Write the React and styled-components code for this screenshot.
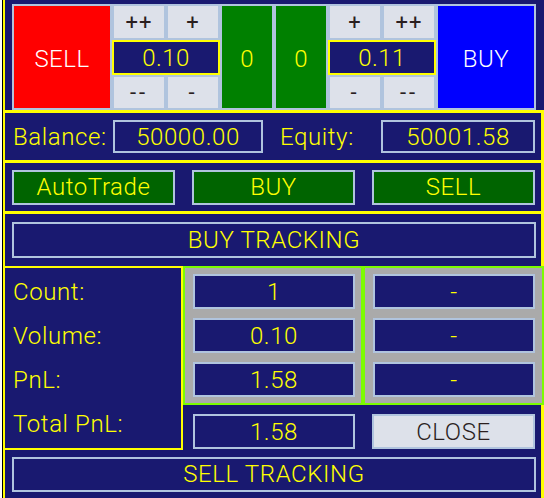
import React from "react";
import styled, { createGlobalStyle } from "styled-components";

const NAVY = "#191970";
const YELLOW = "#ffff00";
const STEEL = "#b0c4de";
const LIGHT = "#dde1ea";
const DARKTXT = "#2b1f1f";

const Global = createGlobalStyle`
  html, body { margin: 0; padding: 0; background: ${NAVY}; }
  * { box-sizing: border-box; }
  body { font-family: "Roboto", "Liberation Sans", sans-serif; font-weight: 300; }
`;

const Screen = styled.div`
  width: 544px;
  height: 498px;
  display: flex;
  overflow: hidden;
  background: ${NAVY};
`;

const Strip = styled.div`
  width: 5px;
  flex: none;
  background: linear-gradient(to right, #fff 0 2px, #000 2px 3px, ${YELLOW} 3px 5px);
`;

const Panel = styled.div`
  flex: 1;
  display: flex;
  flex-direction: column;
`;

const TopRow = styled.div`
  height: 113px;
  display: flex;
  padding: 4px 8px 0 7px;
  border-bottom: 3px solid ${YELLOW};
  overflow: hidden;
`;

const BigButton = styled.div`
  width: 100px;
  height: 106px;
  border: 2px solid ${STEEL};
  background: ${(p) => p.$bg};
  color: #fff;
  font-size: 24px;
  display: flex;
  align-items: center;
  justify-content: center;
  letter-spacing: 0.5px;
  padding-top: 3px;
`;

const Stepper = styled.div`
  width: 108px;
  display: flex;
  flex-direction: column;
`;

const StepRow = styled.div`
  display: flex;
  height: ${(p) => p.$h}px;
`;

const StepButton = styled.div`
  flex: 1;
  border: 2px solid ${STEEL};
  background: ${LIGHT};
  color: ${DARKTXT};
  font-size: 22px;
  font-weight: 400;
  display: flex;
  align-items: center;
  justify-content: center;
  letter-spacing: ${(p) => (p.$minus ? "3px" : "1px")};
`;

const LotBox = styled.div`
  height: 35px;
  border: 2px solid ${YELLOW};
  background: ${NAVY};
  color: ${YELLOW};
  font-size: 24px;
  display: flex;
  align-items: center;
  justify-content: center;
  letter-spacing: 0.5px;
`;

const GreenBox = styled.div`
  width: 54px;
  height: 106px;
  border: 2px solid ${STEEL};
  background: #008000;
  color: ${YELLOW};
  font-size: 24px;
  display: flex;
  align-items: center;
  justify-content: center;
  padding-top: 3px;
`;

const Section = styled.div`
  height: ${(p) => p.$h}px;
  padding: 0 5px 0 7px;
  border-right: 3px solid ${YELLOW};
  border-bottom: ${(p) => (p.$line ? `3px solid ${YELLOW}` : "none")};
  display: ${(p) => (p.$grid ? "grid" : "flex")};
  align-items: center;
`;

const InfoGrid = styled(Section)`
  grid-template-columns: 101px 150px 118px 154px;
`;

const ButtonGrid = styled(Section)`
  grid-template-columns: repeat(3, 163px);
  column-gap: 17px;
`;

const Label = styled.div`
  color: ${YELLOW};
  font-size: 24px;
  padding-left: ${(p) => p.$pad || 0}px;
  letter-spacing: 0.6px;
  white-space: nowrap;
`;

const ValueBox = styled.div`
  height: ${(p) => p.$h || 35}px;
  border: 2px solid ${STEEL};
  background: ${NAVY};
  color: ${YELLOW};
  font-size: 24px;
  display: flex;
  align-items: center;
  justify-content: center;
  letter-spacing: 0.6px;
  width: 100%;
`;

const ToggleButton = styled(ValueBox)`
  background: #006400;
`;

const LightButton = styled(ValueBox)`
  background: ${LIGHT};
  color: ${DARKTXT};
`;

const Table = styled.div`
  display: grid;
  grid-template-columns: 178px 180px 181px;
  grid-template-rows: 139px 45px;
`;

const LabelBox = styled.div`
  grid-row: 1 / 3;
  border: 2px solid ${YELLOW};
  border-left: none;
  display: flex;
  flex-direction: column;
  gap: 9px;
  padding: 6px 0 0 8px;
`;

const LabelRow = styled(Label)`
  height: 35px;
  display: flex;
  align-items: center;
`;

const Group = styled.div`
  border: 2px solid #7cfc00;
  background: #aaaaaa;
  display: flex;
  flex-direction: column;
  gap: 9px;
  padding: 6px ${(p) => p.$right}px 6px 8px;
`;

const TotalCell = styled.div`
  padding: 9px ${(p) => p.$right}px 0 ${(p) => p.$left}px;
  border-right: ${(p) => (p.$edge ? `3px solid ${YELLOW}` : "none")};
`;

const LotStepper = ({ top, bottom, value }) => (
  <Stepper>
    <StepRow $h={36}>
      {top.map((t) => (
        <StepButton key={t}>{t}</StepButton>
      ))}
    </StepRow>
    <LotBox>{value}</LotBox>
    <StepRow $h={35}>
      {bottom.map((t) => (
        <StepButton key={t} $minus>
          {t}
        </StepButton>
      ))}
    </StepRow>
  </Stepper>
);

export default function App() {
  const rows = [
    { label: "Count:", buy: "1", sell: "-" },
    { label: "Volume:", buy: "0.10", sell: "-" },
    { label: "PnL:", buy: "1.58", sell: "-" },
  ];
  return (
    <>
      <Global />
      <Screen>
        <Strip />
        <Panel>
          <TopRow>
            <BigButton $bg="#ff0000">SELL</BigButton>
            <LotStepper top={["++", "+"]} bottom={["--", "-"]} value="0.10" />
            <GreenBox>0</GreenBox>
            <GreenBox>0</GreenBox>
            <LotStepper top={["+", "++"]} bottom={["-", "--"]} value="0.11" />
            <BigButton $bg="#0000ff">BUY</BigButton>
          </TopRow>

          <InfoGrid $h={50} $grid $line>
            <Label $pad={1}>Balance:</Label>
            <ValueBox $h={33}>50000.00</ValueBox>
            <Label $pad={17}>Equity:</Label>
            <ValueBox $h={33}>50001.58</ValueBox>
          </InfoGrid>

          <ButtonGrid $h={51} $grid $line>
            <ToggleButton>AutoTrade</ToggleButton>
            <ToggleButton>BUY</ToggleButton>
            <ToggleButton>SELL</ToggleButton>
          </ButtonGrid>

          <Section $h={52}>
            <ValueBox $h={36}>BUY TRACKING</ValueBox>
          </Section>

          <Table>
            <LabelBox>
              {rows.map((r) => (
                <LabelRow key={r.label}>{r.label}</LabelRow>
              ))}
              <LabelRow>Total PnL:</LabelRow>
            </LabelBox>
            <Group $right={6}>
              {rows.map((r) => (
                <ValueBox key={r.label}>{r.buy}</ValueBox>
              ))}
            </Group>
            <Group $right={7}>
              {rows.map((r) => (
                <ValueBox key={r.label}>{r.sell}</ValueBox>
              ))}
            </Group>
            <TotalCell $left={10} $right={8}>
              <ValueBox>1.58</ValueBox>
            </TotalCell>
            <TotalCell $left={9} $right={6} $edge>
              <LightButton>CLOSE</LightButton>
            </TotalCell>
          </Table>

          <Section $h={48}>
            <ValueBox>SELL TRACKING</ValueBox>
          </Section>
        </Panel>
      </Screen>
    </>
  );
}
